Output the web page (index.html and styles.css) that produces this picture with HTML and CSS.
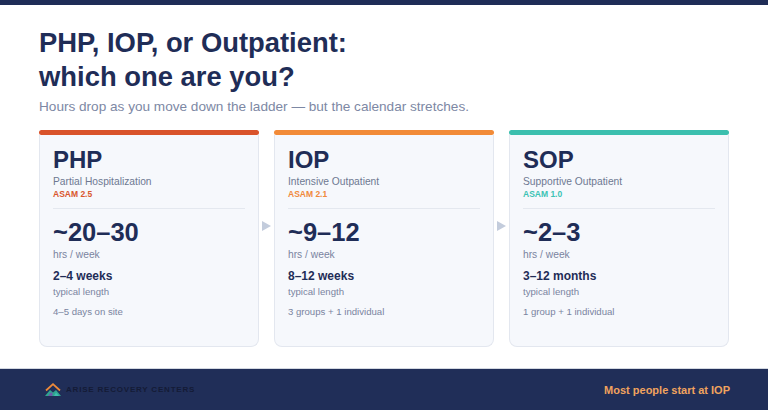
FILE: index.html
```html
<!DOCTYPE html>
<html lang="en">
<head>
<meta charset="utf-8">
<title>PHP, IOP, or Outpatient</title>
<link rel="stylesheet" href="styles.css">
</head>
<body>
<div class="topbar"></div>
<main class="main">
  <h1 class="title">PHP, IOP, or Outpatient:<br>which one are you?</h1>
  <p class="subtitle">Hours drop as you move down the ladder — but the calendar stretches.</p>
  <div class="cards">
    <section class="card card-php">
      <div class="accent"></div>
      <div class="body">
        <h2 class="level">PHP</h2>
        <div class="name">Partial Hospitalization</div>
        <div class="asam">ASAM 2.5</div>
        <div class="divider"></div>
        <div class="value">~20–30</div>
        <div class="unit">hrs / week</div>
        <div class="duration">2–4 weeks</div>
        <div class="small">typical length</div>
        <div class="note">4–5 days on site</div>
      </div>
    </section>
    <div class="arrow"><span class="tri"></span></div>
    <section class="card card-iop">
      <div class="accent"></div>
      <div class="body">
        <h2 class="level">IOP</h2>
        <div class="name">Intensive Outpatient</div>
        <div class="asam">ASAM 2.1</div>
        <div class="divider"></div>
        <div class="value">~9–12</div>
        <div class="unit">hrs / week</div>
        <div class="duration">8–12 weeks</div>
        <div class="small">typical length</div>
        <div class="note">3 groups + 1 individual</div>
      </div>
    </section>
    <div class="arrow"><span class="tri"></span></div>
    <section class="card card-sop">
      <div class="accent"></div>
      <div class="body">
        <h2 class="level">SOP</h2>
        <div class="name">Supportive Outpatient</div>
        <div class="asam">ASAM 1.0</div>
        <div class="divider"></div>
        <div class="value">~2–3</div>
        <div class="unit">hrs / week</div>
        <div class="duration">3–12 months</div>
        <div class="small">typical length</div>
        <div class="note">1 group + 1 individual</div>
      </div>
    </section>
  </div>
</main>
<footer class="footer">
  <div class="brand">
    <svg class="logo" width="18" height="14" viewBox="0 0 18 14" aria-hidden="true">
      <polygon points="1,13 6,7 9,9.5 12,7 17,13" fill="#2fa48f"/>
      <polygon points="4,13 7,9 9,11 8,13" fill="#6b5aa8"/>
      <polygon points="10,13 12,9.5 15,13" fill="#3fbfae"/>
      <polyline points="2,7.5 9,1.2 16,7.5" fill="none" stroke="#ee8a3a" stroke-width="1.8" stroke-linejoin="miter"/>
    </svg>
    <span class="brand-name">ARISE RECOVERY CENTERS</span>
  </div>
  <div class="cta">Most people start at IOP</div>
</footer>
</body>
</html>
```

FILE: styles.css
```css
* { box-sizing: border-box; }
html, body { margin: 0; padding: 0; }
body {
  width: 768px;
  height: 410px;
  overflow: hidden;
  background: #ffffff;
  font-family: "Liberation Sans", Arial, sans-serif;
  color: #1f2d57;
  display: flex;
  flex-direction: column;
}
.topbar {
  height: 5px;
  background: #1f2d57;
  flex: none;
}
.main {
  flex: 1;
  padding: 21px 39px 0 39px;
}
.title {
  margin: 0;
  font-size: 27.4px;
  line-height: 34px;
  font-weight: 700;
  color: #1f2d57;
}
.subtitle {
  margin: 5px 0 0 0;
  font-size: 13.6px;
  line-height: 16px;
  color: #7d88a4;
}
.cards {
  margin-top: 15px;
  display: flex;
  height: 217px;
}
.card {
  width: 220px;
  display: flex;
  flex-direction: column;
}
.accent {
  height: 5px;
  border-radius: 3px;
  flex: none;
}
.card-php .accent { background: #d9532b; }
.card-iop .accent { background: #f28b38; }
.card-sop .accent { background: #3bbfae; }
.body {
  flex: 1;
  background: #f6f8fc;
  border: 1px solid #e3e7ef;
  border-top: none;
  border-radius: 0 0 8px 8px;
  padding: 11px 13px 0 13px;
}
.level {
  margin: 0;
  font-size: 24px;
  line-height: 28px;
  font-weight: 700;
  color: #1f2d57;
}
.name {
  margin-top: 1px;
  font-size: 10.25px;
  line-height: 13px;
  color: #6e7892;
}
.asam {
  margin-top: 1px;
  font-size: 8.5px;
  line-height: 11px;
  font-weight: 700;
}
.card-php .asam { color: #d9572e; }
.card-iop .asam { color: #f08a3c; }
.card-sop .asam { color: #3cc3b4; }
.divider {
  margin-top: 8px;
  height: 1px;
  background: #e4e8ef;
}
.value {
  margin-top: 9px;
  font-size: 25.5px;
  line-height: 28px;
  font-weight: 700;
  color: #1f2d57;
}
.unit {
  margin-top: 1.5px;
  font-size: 10.25px;
  line-height: 13px;
  color: #7a84a0;
}
.duration {
  margin-top: 8.5px;
  font-size: 12px;
  line-height: 14px;
  font-weight: 700;
  color: #1f2d57;
}
.small {
  margin-top: 2.7px;
  font-size: 9.6px;
  line-height: 12px;
  color: #7a84a0;
}
.note {
  margin-top: 8.5px;
  font-size: 9.6px;
  line-height: 12px;
  color: #7a84a0;
}
.arrow {
  width: 15px;
  flex: none;
  display: flex;
  justify-content: center;
  padding-top: 91px;
}
.tri {
  width: 0;
  height: 0;
  border-top: 5px solid transparent;
  border-bottom: 5px solid transparent;
  border-left: 9px solid #c3ccdc;
}
.footer {
  flex: none;
  height: 42px;
  background: #202e58;
  border-top: 1px solid #d3d8e1;
  display: flex;
  align-items: center;
  justify-content: space-between;
  padding: 0 38px 0 44px;
}
.brand {
  display: flex;
  align-items: center;
  gap: 4px;
}
.logo { display: block; }
.brand-name {
  font-size: 8px;
  font-weight: 700;
  letter-spacing: 0.8px;
  color: #141b36;
}
.cta {
  font-size: 11px;
  font-weight: 700;
  color: #f0a35e;
}
```
